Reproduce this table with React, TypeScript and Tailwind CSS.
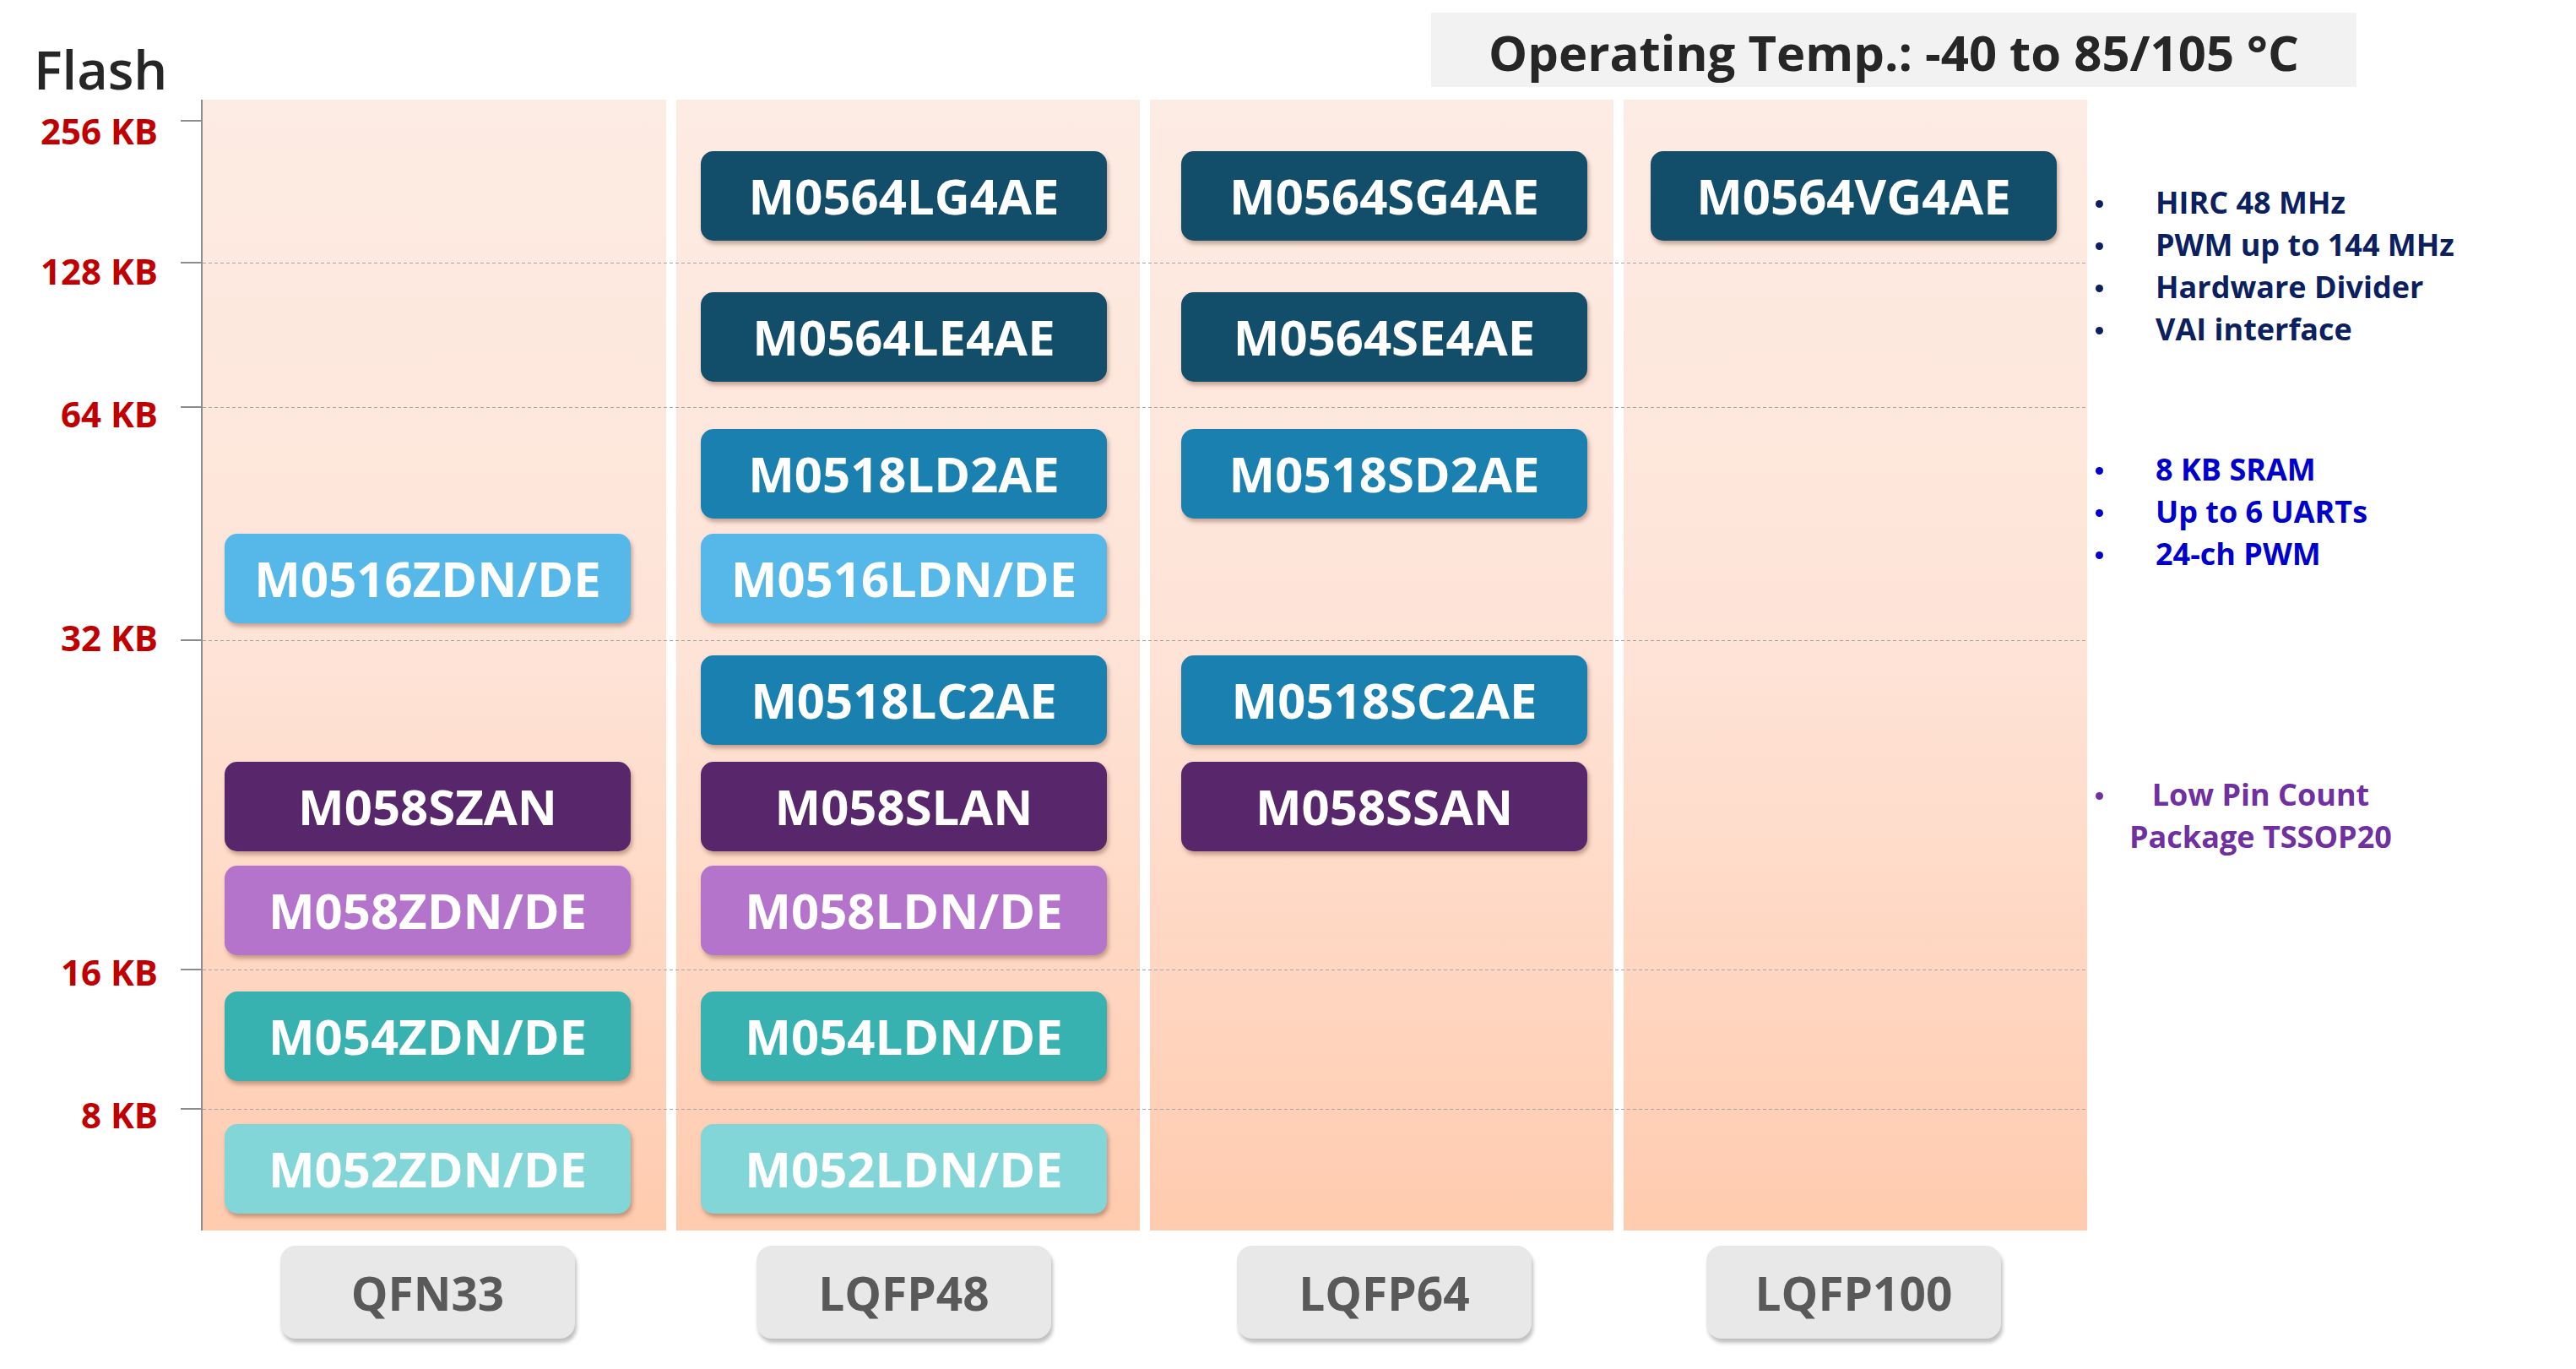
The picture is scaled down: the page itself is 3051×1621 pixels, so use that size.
const ROW_GAPS = ["mt-[61px]", "mt-[61px]", "mt-[56px]", "mt-[18px]", "mt-[38px]", "mt-[20px]", "mt-[17px]", "mt-[43px]", "mt-[51px]"]

// chip colour follows the flash/sram row
const ROW_COLORS = [
  "bg-[#124d69]",
  "bg-[#124d69]",
  "bg-[#1a80b0]",
  "bg-[#55b8e8]",
  "bg-[#1a80b0]",
  "bg-[#58266a]",
  "bg-[#b474cc]",
  "bg-[#38b1b1]",
  "bg-[#82d6d8]",
]

const columns = [
  {
    pkg: "QFN33",
    pad: "pl-[26px]",
    chips: [null, null, null, "M0516ZDN/DE", null, "M058SZAN", "M058ZDN/DE", "M054ZDN/DE", "M052ZDN/DE"],
  },
  {
    pkg: "LQFP48",
    pad: "pl-[29px]",
    chips: [
      "M0564LG4AE",
      "M0564LE4AE",
      "M0518LD2AE",
      "M0516LDN/DE",
      "M0518LC2AE",
      "M058SLAN",
      "M058LDN/DE",
      "M054LDN/DE",
      "M052LDN/DE",
    ],
  },
  {
    pkg: "LQFP64",
    pad: "pl-[37px]",
    chips: ["M0564SG4AE", "M0564SE4AE", "M0518SD2AE", null, "M0518SC2AE", "M058SSAN", null, null, null],
  },
  {
    pkg: "LQFP100",
    pad: "pl-[32px]",
    chips: ["M0564VG4AE", null, null, null, null, null, null, null, null],
  },
]

const axisLabels = [
  { text: "256 KB", label: "top-[16px]", tick: "top-[24px]" },
  { text: "128 KB", label: "top-[182px]", tick: "top-[192px]" },
  { text: "64 KB", label: "top-[351px]", tick: "top-[363px]" },
  { text: "32 KB", label: "top-[616px]", tick: "top-[639px]" },
  { text: "16 KB", label: "top-[1012px]", tick: "top-[1029px]" },
  { text: "8 KB", label: "top-[1181px]", tick: "top-[1194px]" },
]

const gridLines = ["top-[193px]", "top-[364px]", "top-[640px]", "top-[1030px]", "top-[1195px]"]

function Bullet({ color, text }: { color: string; text: string }) {
  return (
    <div className="flex items-start leading-[50px]">
      <div className="w-[71px] shrink-0">
        <div className={`mt-[22px] h-[9px] w-[9px] rounded-full ${color}`} />
      </div>
      <span>{text}</span>
    </div>
  )
}

export default function App() {
  return (
    <div className="w-[3051px] h-[1621px] bg-white overflow-hidden font-['Open_Sans',sans-serif]">
      {/* Header */}
      <div className="flex h-[118px]">
        <div className="w-[1695px] shrink-0 pl-[40px] pt-[50px]">
          <div className="text-[63px] leading-none font-semibold text-[#262626]">Flash</div>
        </div>
        <div className="mt-[15px] flex h-[88px] w-[1096px] items-center justify-center bg-[#f2f2f2] pt-[6px] text-[58px] font-bold leading-none text-[#262626]">
          Operating Temp.: -40 to 85/105 °C
        </div>
      </div>

      {/* Chart */}
      <div className="flex">
        {/* Y axis */}
        <div className="relative h-[1339px] w-[238px] shrink-0">
          {axisLabels.map((a) => (
            <div key={a.text}>
              <div className={`absolute right-[51px] ${a.label} text-[42px] font-bold leading-none text-[#c00000]`}>
                {a.text}
              </div>
              <div className={`absolute right-0 ${a.tick} h-[2px] w-[24px] bg-[#8c8c8c]`} />
            </div>
          ))}
        </div>

        {/* Plot */}
        <div className="relative flex h-[1339px] shrink-0 gap-[12px] border-l-2 border-[#8c8c8c]">
          {columns.map((col) => (
            <div
              key={col.pkg}
              className={`h-full w-[549px] bg-linear-to-b from-[#fdece4] via-[#fee3d6] to-[#ffcbaf] ${col.pad}`}
            >
              {col.chips.map((chip, i) => (
                <div key={i} className={`h-[106px] w-[481px] ${ROW_GAPS[i]}`}>
                  {chip && (
                    <div
                      className={`flex h-full w-full items-center justify-center rounded-[15px] text-[58px] font-bold leading-none text-white shadow-[2px_4px_5px_rgba(90,40,20,0.35)] ${ROW_COLORS[i]}`}
                    >
                      {chip}
                    </div>
                  )}
                </div>
              ))}
            </div>
          ))}
          {gridLines.map((g) => (
            <div
              key={g}
              className={`absolute left-0 right-0 ${g} h-px bg-[repeating-linear-gradient(90deg,#a6a6a6_0_4px,transparent_4px_7px)]`}
            />
          ))}
        </div>

        {/* Notes */}
        <div className="flex flex-col pl-[10px] pt-[97px] text-[36px] font-bold">
          <div className="text-[#0c1f5e]">
            <Bullet color="bg-[#0c1f5e]" text="HIRC 48 MHz" />
            <Bullet color="bg-[#0c1f5e]" text="PWM up to 144 MHz" />
            <Bullet color="bg-[#0c1f5e]" text="Hardware Divider" />
            <Bullet color="bg-[#0c1f5e]" text="VAI interface" />
          </div>
          <div className="mt-[116px] text-[#0000cc]">
            <Bullet color="bg-[#0000cc]" text="8 KB SRAM" />
            <Bullet color="bg-[#0000cc]" text="Up to 6 UARTs" />
            <Bullet color="bg-[#0000cc]" text="24-ch PWM" />
          </div>
          <div className="mt-[235px] flex items-start leading-[50px] text-[#7030a0]">
            <div className="w-[40px] shrink-0">
              <div className="mt-[22px] h-[9px] w-[9px] rounded-full bg-[#7030a0]" />
            </div>
            <div className="text-center">
              Low Pin Count
              <br />
              Package TSSOP20
            </div>
          </div>
        </div>
      </div>

      {/* Package labels */}
      <div className="mt-[18px] flex gap-[12px] pl-[240px]">
        {columns.map((col) => (
          <div key={col.pkg} className={`w-[549px] shrink-0 ${col.pad}`}>
            <div className="ml-[66px] flex h-[110px] w-[349px] items-center justify-center rounded-[18px] bg-[#e8e8e8] text-[55px] font-bold leading-none text-[#595959] shadow-[2px_5px_4px_rgba(0,0,0,0.25)]">
              {col.pkg}
            </div>
          </div>
        ))}
      </div>
    </div>
  )
}
